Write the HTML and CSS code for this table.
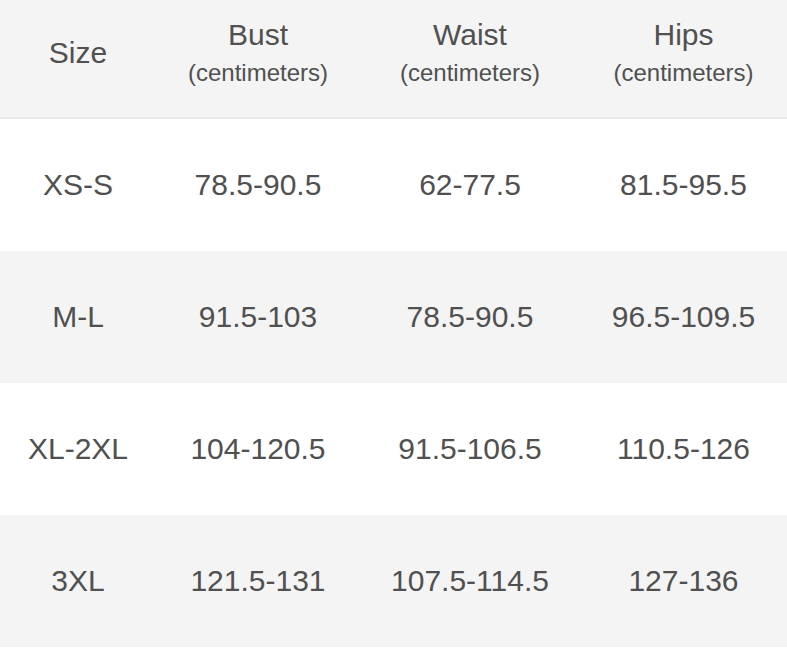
FILE: index.html
```html
<!DOCTYPE html>
<html>
<head>
<meta charset="utf-8">
<link rel="stylesheet" href="styles.css">
</head>
<body>
<div class="chart">
  <div class="row head">
    <div class="cell"><span class="t">Size</span></div>
    <div class="cell"><span class="t">Bust</span><span class="sub">(centimeters)</span></div>
    <div class="cell"><span class="t">Waist</span><span class="sub">(centimeters)</span></div>
    <div class="cell"><span class="t">Hips</span><span class="sub">(centimeters)</span></div>
  </div>
  <div class="row">
    <div class="cell"><span class="t">XS-S</span></div>
    <div class="cell"><span class="t">78.5-90.5</span></div>
    <div class="cell"><span class="t">62-77.5</span></div>
    <div class="cell"><span class="t">81.5-95.5</span></div>
  </div>
  <div class="row alt">
    <div class="cell"><span class="t">M-L</span></div>
    <div class="cell"><span class="t">91.5-103</span></div>
    <div class="cell"><span class="t">78.5-90.5</span></div>
    <div class="cell"><span class="t">96.5-109.5</span></div>
  </div>
  <div class="row">
    <div class="cell"><span class="t">XL-2XL</span></div>
    <div class="cell"><span class="t">104-120.5</span></div>
    <div class="cell"><span class="t">91.5-106.5</span></div>
    <div class="cell"><span class="t">110.5-126</span></div>
  </div>
  <div class="row alt">
    <div class="cell"><span class="t">3XL</span></div>
    <div class="cell"><span class="t">121.5-131</span></div>
    <div class="cell"><span class="t">107.5-114.5</span></div>
    <div class="cell"><span class="t">127-136</span></div>
  </div>
</div>
</body>
</html>
```

FILE: styles.css
```css
html, body {
  margin: 0;
  padding: 0;
  background: #ffffff;
}
.chart {
  width: 787px;
  font-family: "Liberation Sans", Arial, sans-serif;
  color: #505050;
}
.row {
  display: grid;
  grid-template-columns: 156px 204px 220px 207px;
  height: 132px;
}
.row.head {
  height: 117px;
  background: #f4f4f4;
  border-bottom: 2px solid #e8e8e8;
}
.row.alt {
  background: #f4f4f4;
}
.cell {
  display: flex;
  flex-direction: column;
  align-items: center;
  justify-content: center;
}
.head .cell {
  padding-bottom: 12px;
}
.t {
  font-size: 30px;
  line-height: 36px;
  white-space: nowrap;
}
.head .t {
  line-height: 40px;
}
.sub {
  font-size: 24px;
  line-height: 36px;
  white-space: nowrap;
}
```
